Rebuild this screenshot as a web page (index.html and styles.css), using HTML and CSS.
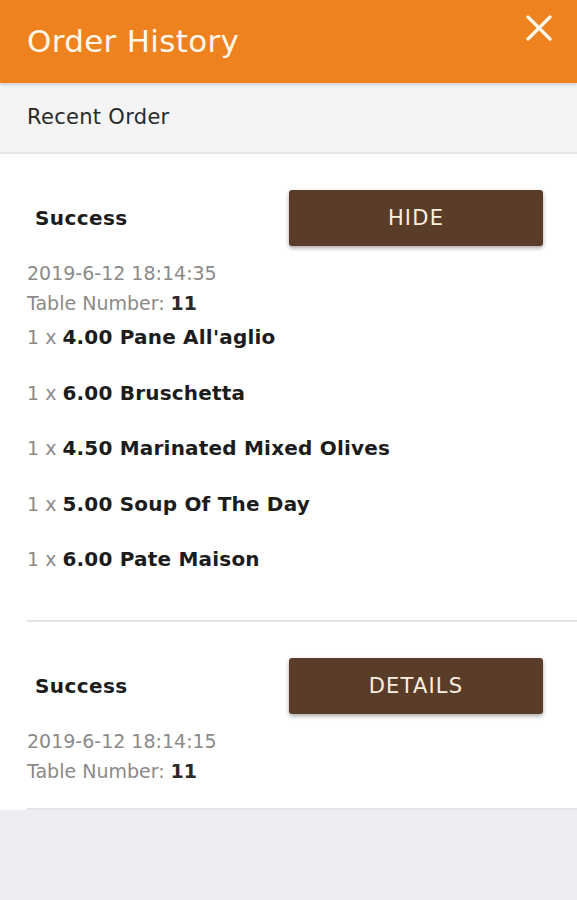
FILE: index.html
```html
<!DOCTYPE html>
<html lang="en">

<head>
  <meta charset="UTF-8">
  <meta name="viewport" content="width=device-width, initial-scale=1.0">
  <title>Order History</title>

  <link rel="stylesheet" href="styles.css">
</head>

<body>
  <header class="top-bar">
    <h1>Order History</h1>
    <svg class="close-icon" width="26" height="26" viewBox="0 0 26 26">
      <path d="M2 2 L24 24 M24 2 L2 24" stroke="#fff7ea" stroke-width="3.2" stroke-linecap="round" />
    </svg>
  </header>

  <div class="section-title">Recent Order</div>

  <main class="orders">
    <div class="order">
      <div class="order-head">
        <span class="status">Success</span>
        <button class="order-btn">HIDE</button>
      </div>
      <div class="meta">2019-6-12 18:14:35</div>
      <div class="meta">Table Number: <b>11</b></div>
      <ul class="items">
        <li><span class="qty">1 x</span> <b>4.00 Pane All'aglio</b></li>
        <li><span class="qty">1 x</span> <b>6.00 Bruschetta</b></li>
        <li><span class="qty">1 x</span> <b>4.50 Marinated Mixed Olives</b></li>
        <li><span class="qty">1 x</span> <b>5.00 Soup Of The Day</b></li>
        <li><span class="qty">1 x</span> <b>6.00 Pate Maison</b></li>
      </ul>
    </div>

    <div class="order">
      <div class="order-head">
        <span class="status">Success</span>
        <button class="order-btn">DETAILS</button>
      </div>
      <div class="meta">2019-6-12 18:14:15</div>
      <div class="meta">Table Number: <b>11</b></div>
    </div>
  </main>
</body>

</html>
```

FILE: styles.css
```css
body {
  font-family: "DejaVu Sans", sans-serif;
  background-color: #eceef1;
  margin: 0;
  color: #1c1c1c;
}

.top-bar {
  background-color: #ee821f;
  height: 83px;
  display: flex;
  justify-content: space-between;
  align-items: flex-start;
  padding: 0 25px 0 27px;
  box-shadow: 0 2px 3px rgba(0, 0, 0, 0.15);
  position: relative;
}

.top-bar h1 {
  margin: 23px 0 0;
  font-size: 31px;
  font-weight: 400;
  letter-spacing: 0.3px;
  color: #fff7ea;
}

.close-icon {
  margin-top: 15px;
}

.section-title {
  background-color: #f4f4f4;
  height: 69px;
  line-height: 69px;
  padding-left: 27px;
  font-size: 21px;
  letter-spacing: 0.3px;
  color: #2a2a2a;
  border-bottom: 2px solid #e6e6e6;
}

.orders {
  background-color: #ffffff;
  padding-left: 27px;
}

.order {
  border-bottom: 2px solid #e4e4e4;
  padding-top: 36px;
  padding-bottom: 22px;
}

.order:first-child {
  padding-bottom: 46px;
}

.order-head {
  display: flex;
  align-items: center;
  justify-content: space-between;
  padding-right: 34px;
  margin-bottom: 12px;
}

.status {
  font-weight: 700;
  font-size: 20px;
  letter-spacing: 0.4px;
  margin-left: 8px;
}

.order-btn {
  width: 254px;
  height: 56px;
  background-color: #5a3d28;
  color: #fbefdf;
  border: none;
  border-radius: 3px;
  font-family: inherit;
  font-size: 21px;
  letter-spacing: 1.2px;
  box-shadow: 0 2px 4px rgba(0, 0, 0, 0.35);
}

.meta {
  font-size: 19px;
  line-height: 30px;
  color: #8a8a8a;
}

.meta b {
  color: #2a2a2a;
}

.items {
  list-style: none;
  margin: 4px 0 0;
  padding: 0;
}

.items li {
  font-size: 19px;
  line-height: 30px;
  margin-bottom: 25.5px;
}

.items li b {
  font-size: 20px;
  letter-spacing: 0.2px;
}

.items li:last-child {
  margin-bottom: 0;
}

.qty {
  color: #8a8a8a;
}
```
